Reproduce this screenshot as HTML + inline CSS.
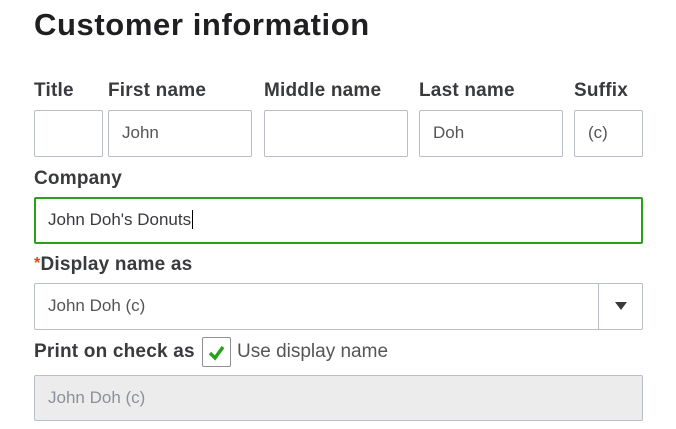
<!DOCTYPE html>
<html><head><style>
body{margin:0;background:#fff;font-family:"Liberation Sans",sans-serif;color:#393a3d;width:676px;height:429px;overflow:hidden;position:relative}
.a{position:absolute}
h1{position:absolute;left:34px;top:7px;margin:0;font-size:31px;font-weight:bold;color:#1f1f21;letter-spacing:0.6px}
.l{position:absolute;font-size:19px;font-weight:bold;color:#393a3d;letter-spacing:0.2px}
.i{position:absolute;box-sizing:border-box;border:1px solid #babec5;border-radius:2px;background:#fff;font-size:17px;color:#555;padding-left:13px;line-height:44px}
</style></head><body>
<h1>Customer information</h1>
<div class="l" style="left:34px;top:80px">Title</div>
<div class="l" style="left:108px;top:80px">First name</div>
<div class="l" style="left:264px;top:80px">Middle name</div>
<div class="l" style="left:419px;top:80px">Last name</div>
<div class="l" style="left:574px;top:80px">Suffix</div>
<div class="i" style="left:34px;top:110px;width:69px;height:47px"></div>
<div class="i" style="left:108px;top:110px;width:144px;height:47px">John</div>
<div class="i" style="left:264px;top:110px;width:144px;height:47px"></div>
<div class="i" style="left:419px;top:110px;width:144px;height:47px">Doh</div>
<div class="i" style="left:574px;top:110px;width:69px;height:47px">(c)</div>
<div class="l" style="left:34px;top:168px">Company</div>
<div class="i" style="left:34px;top:197px;width:609px;height:47px;border:2px solid #2ca01c;padding-left:12px;line-height:41px;color:#393a3d">John Doh's Donuts<span style="border-left:1px solid #000;margin-left:1px"></span></div>
<div class="l" style="left:34px;top:254px"><span style="color:#e4421c;font-size:16px;position:relative;top:-2px">*</span>Display name as</div>
<div class="i" style="left:34px;top:283px;width:609px;height:47px">John Doh (c)</div>
<div class="a" style="left:598px;top:284px;width:1px;height:45px;background:#babec5"></div>
<div class="a" style="left:615px;top:302px;width:0;height:0;border-left:6px solid transparent;border-right:6px solid transparent;border-top:8px solid #393a3d"></div>
<div class="l" style="left:34px;top:341px">Print on check as</div>
<div class="a" style="left:202px;top:337px;width:29px;height:30px;box-sizing:border-box;border:1px solid #8d9096;border-radius:2px">
<svg width="27" height="28" viewBox="0 0 27 28"><path d="M7 15 L12 20 L20 9" stroke="#2ca01c" stroke-width="3.5" fill="none"/></svg></div>
<div class="a" style="left:237px;top:341px;font-size:19px;color:#555">Use display name</div>
<div class="i" style="left:34px;top:375px;width:609px;height:46px;background:#ececec;color:#8d9096;line-height:44px">John Doh (c)</div>
</body></html>
